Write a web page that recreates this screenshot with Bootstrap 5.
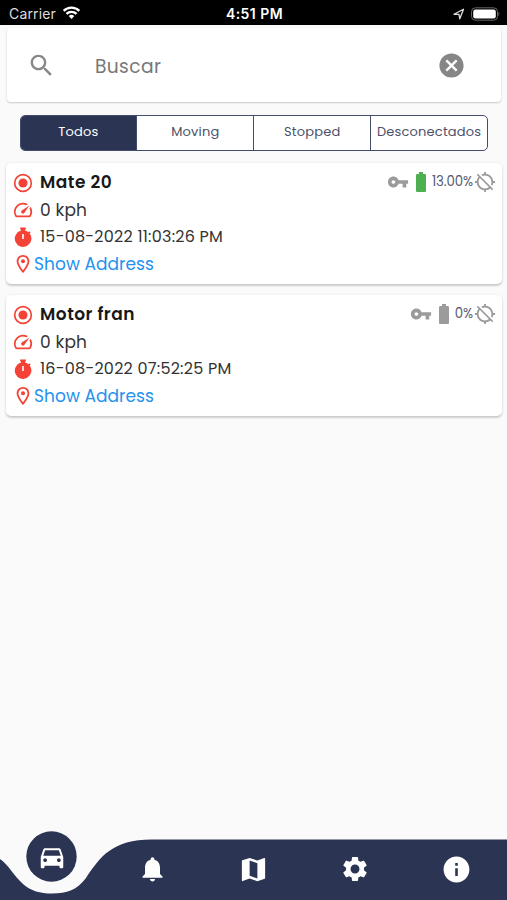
<!DOCTYPE html>
<html lang="es">
<head>
<meta charset="utf-8">
<meta name="viewport" content="width=device-width, initial-scale=1">
<title>Buscar</title>
<link href="https://cdn.jsdelivr.net/npm/bootstrap@5.3.0/dist/css/bootstrap.min.css" rel="stylesheet">
<style>
:root{--navy:#2b3452}
body{font-family:Poppins,Inter,sans-serif;background:#fafafa;color:#333;height:900px;overflow:hidden}
svg{display:block;fill:currentColor;flex:none}
span,a{white-space:nowrap}
.status{height:25px;background:#000;color:#fff;font:14px/25px Inter,sans-serif;padding:1px 7px 0 9px;display:grid;grid-template-columns:1fr auto 1fr}
.status .carrier{color:#ddd;letter-spacing:.15px}
.status .clock{font-size:14px;letter-spacing:.45px}
.panel{border:0;border-radius:5px;background:#fff;box-shadow:0 2px 2px rgba(0,0,0,.17),0 0 3px rgba(0,0,0,.08)}
.search{height:74px;margin:3px 6px 0 7px;padding:1px 35px 0 20px;border-radius:4px;box-shadow:0 1px 2px rgba(0,0,0,.2)}
.search .hint{font-size:18.7px;color:#777;margin-left:39px;letter-spacing:.35px;padding-top:4px}
.tabs{margin:13px 19px 0 19.5px;height:36px;border:1.5px solid #454c6b;border-radius:5px;background:#fff;overflow:hidden}
.tabs a{flex:1 1 0;min-width:0;font-size:13px;letter-spacing:.18px;line-height:32px;color:#4c5068;text-decoration:none;text-align:center}
.tabs a+a{border-left:1.5px solid #454c6b}
.tabs a.active{background:var(--navy);color:#fff}
.device{height:121px;margin:0 5px 11px 6px;padding:6px 6px 0 7px}
.device .line{height:27px}
.device .line>svg{color:#f44336;margin-right:7px}
.device .title-text{font-size:17px;font-weight:600;color:#181818;letter-spacing:.5px}
.device .value{font-size:17px;padding-top:2px;letter-spacing:.15px}
.device .stamp{font-size:16px;letter-spacing:.23px}
.device .addr{font-size:17px;color:#2492ee;text-decoration:none;padding-top:2px;letter-spacing:.05px;margin-left:1px}
.meta{color:#9b9b9b;font-size:13.3px}
.meta span{color:#555970;letter-spacing:-.1px;margin-right:1px;position:relative;top:-.5px}
.meta svg{margin-top:-1px}
.meta .cell{margin:-1px 5px 0 6px}
.dock{height:62px}
.dock .wave{position:absolute;left:0;bottom:0;color:var(--navy)}
.dock .slot{width:101.4px;color:#fff;position:relative;padding-top:16px;padding-left:1px}
.dock .slot.current{padding-top:4px;padding-left:2px}
</style>
<script src="https://cdn.jsdelivr.net/npm/bootstrap@5.3.0/dist/js/bootstrap.bundle.min.js"></script>
</head>
<body class="d-flex flex-column">
<svg width="0" height="0" class="position-absolute">
<symbol id="i-radio" viewBox="0 0 24 24"><circle cx="12" cy="12" r="5.500"/><circle cx="12" cy="12" r="10" fill="none" stroke="currentColor" stroke-width="2"/></symbol>
<symbol id="i-speed" viewBox="1 2 22 20"><path d="M20.380 8.570l-1.230 1.850a8 8 0 0 1-.22 7.580H5.070A8 8 0 0 1 15.580 6.850l1.850-1.230A10 10 0 0 0 3.350 19a2 2 0 0 0 1.720 1h13.850a2 2 0 0 0 1.740-1 10 10 0 0 0-.27-10.440zm-9.790 6.840a2 2 0 0 0 2.830 0l5.660-8.490-8.490 5.660a2 2 0 0 0 0 2.830z"/></symbol>
<symbol id="i-timer" viewBox="0 0 20 20"><path fill-rule="evenodd" d="M7.200.5h5.600v2H12v1.100a8 8 0 0 1 3.300 1.600l1-1 1.400 1.400-1 1A8.300 8.300 0 1 1 8 3.600V2.500h-.8zM9.200 7v5h1.600V7z"/></symbol>
<symbol id="i-pin" viewBox="4 1 16 22"><path d="M12 2C8.130 2 5 5.130 5 9c0 5.250 7 13 7 13s7-7.750 7-13c0-3.870-3.130-7-7-7zM7 9c0-2.760 2.240-5 5-5s5 2.240 5 5c0 2.880-2.880 7.190-5 9.880C9.920 16.210 7 11.850 7 9z"/><circle cx="12" cy="9" r="2.200"/></symbol>
<symbol id="i-key" viewBox="0 0 24 24"><path d="M12.650 10C11.830 7.670 9.610 6 7 6c-3.310 0-6 2.690-6 6s2.690 6 6 6c2.610 0 4.830-1.670 5.650-4H17v4h4v-4h2v-4H12.650zM7 14c-1.100 0-2-.9-2-2s.9-2 2-2 2 .9 2 2-.9 2-2 2z"/></symbol>
<symbol id="i-battery" viewBox="6 1 12 22"><path d="M15.670 4H14V2h-4v2H8.330C7.600 4 7 4.600 7 5.330v15.330C7 21.400 7.600 22 8.330 22h7.330c.74 0 1.340-.6 1.340-1.330V5.330C17 4.600 16.400 4 15.670 4z"/></symbol>
<symbol id="i-nogps" viewBox="0 0 24 24"><path d="M20.940 11c-.46-4.170-3.770-7.480-7.940-7.940V1h-2v2.060c-1.130.12-2.190.46-3.160.97l1.500 1.500C10.160 5.190 11.060 5 12 5c3.870 0 7 3.130 7 7 0 .94-.19 1.840-.52 2.650l1.500 1.500c.5-.96.84-2.020.97-3.150H23v-2h-2.060zM3 4.270l2.040 2.040C3.970 7.620 3.250 9.230 3.060 11H1v2h2.060c.46 4.170 3.770 7.480 7.940 7.940V23h2v-2.060c1.770-.2 3.380-.91 4.690-1.980L19.730 21 21 19.730 4.270 3 3 4.270zm13.270 13.270C15.090 18.450 13.610 19 12 19c-3.870 0-7-3.130-7-7 0-1.610.55-3.090 1.460-4.270l9.810 9.810z"/></symbol>
</svg>

<header class="status">
<div class="d-flex align-items-center"><span class="carrier">Carrier</span><svg style="margin:-2px 0 0 6px" width="19" height="14" viewBox="0 0 20 15"><path d="M1.600 5.200a12 12 0 0 1 16.800 0M4.600 8.500a7.700 7.700 0 0 1 10.800 0" fill="none" stroke="#fff" stroke-width="2.500"/><path d="M10 14l-3-3.200a4.500 4.500 0 0 1 6 0z"/></svg></div>
<span class="fw-semibold clock">4:51 PM</span>
<div class="d-flex align-items-center justify-content-end gap-1"><svg width="14" height="14" viewBox="0 0 14 14"><path d="M2 7.300L11.500 2.200 7.800 11.800 7 7.300z" fill="none" stroke="#ddd" stroke-width="1.300" stroke-linejoin="round"/></svg><svg width="30" height="14" viewBox="0 0 30 14"><rect x="1.500" y=".8" width="26" height="12.400" rx="3.800" fill="none" stroke="#666"/><rect x="3.200" y="2.500" width="22.600" height="9" rx="2.200"/><path d="M28.500 4.800q1.800 2.200 0 4.400z" fill="#777"/></svg></div>
</header>

<div class="panel search d-flex align-items-center">
<svg width="29" height="29" viewBox="0 0 24 24" color="#888"><path d="M15.500 14h-.79l-.28-.27C15.410 12.590 16 11.110 16 9.500 16 5.910 13.090 3 9.500 3S3 5.910 3 9.500 5.910 16 9.500 16c1.610 0 3.090-.59 4.230-1.570l.27.28v.79l5 4.990L20.490 19l-4.990-5zm-6 0C7.010 14 5 11.990 5 9.500S7.010 5 9.500 5 14 7.010 14 9.500 11.990 14 9.500 14z"/></svg>
<span class="hint">Buscar</span>
<svg class="ms-auto" width="29" height="29" viewBox="0 0 24 24" color="#868686"><path d="M12 2C6.470 2 2 6.470 2 12s4.470 10 10 10 10-4.470 10-10S17.530 2 12 2zm5 13.590L15.590 17 12 13.410 8.410 17 7 15.590 10.590 12 7 8.410 8.410 7 12 10.590 15.590 7 17 8.410 13.410 12 17 15.590z"/></svg>
</div>

<nav class="tabs d-flex">
<a href="#" class="active">Todos</a><a href="#">Moving</a><a href="#">Stopped</a><a href="#">Desconectados</a>
</nav>

<main class="flex-grow-1" style="padding-top:12px">
<article class="panel device">
<div class="line d-flex align-items-center"><svg width="20" height="20"><use href="#i-radio"/></svg><span class="title-text">Mate 20</span>
<div class="meta ms-auto d-flex align-items-center"><svg width="22" height="22"><use href="#i-key"/></svg><svg width="12" height="22" class="cell"><use href="#i-battery" color="#4caf50"/></svg><span>13.00%</span><svg width="22" height="22"><use href="#i-nogps"/></svg></div></div>
<div class="line d-flex align-items-center"><svg width="20" height="20"><use href="#i-speed"/></svg><span class="value">0 kph</span></div>
<div class="line d-flex align-items-center"><svg width="20" height="20"><use href="#i-timer"/></svg><span class="stamp">15-08-2022 11:03:26 PM</span></div>
<div class="line d-flex align-items-center"><svg width="20" height="20" class="me-0"><use href="#i-pin"/></svg><a class="addr" href="#">Show Address</a></div>
</article>
<article class="panel device">
<div class="line d-flex align-items-center"><svg width="20" height="20"><use href="#i-radio"/></svg><span class="title-text">Motor fran</span>
<div class="meta ms-auto d-flex align-items-center"><svg width="22" height="22"><use href="#i-key"/></svg><svg width="12" height="22" class="cell"><use href="#i-battery"/></svg><span>0%</span><svg width="22" height="22"><use href="#i-nogps"/></svg></div></div>
<div class="line d-flex align-items-center"><svg width="20" height="20"><use href="#i-speed"/></svg><span class="value">0 kph</span></div>
<div class="line d-flex align-items-center"><svg width="20" height="20"><use href="#i-timer"/></svg><span class="stamp">16-08-2022 07:52:25 PM</span></div>
<div class="line d-flex align-items-center"><svg width="20" height="20" class="me-0"><use href="#i-pin"/></svg><a class="addr" href="#">Show Address</a></div>
</article>
</main>

<nav class="dock position-relative d-flex">
<svg class="wave" width="507" height="69" viewBox="0 0 507 69"><path d="M0 28C8 33 14 45 23 53C31 60 40 62.500 52 62.500C67 62.500 77 59 86 47C100 26 112 8.500 152 8.500H507V69H0z"/><circle cx="51.500" cy="25.500" r="25.200"/></svg>
<a href="#" class="slot current d-flex justify-content-center"><svg width="30" height="30" viewBox="0 0 24 24"><path d="M18.920 6.010C18.720 5.420 18.160 5 17.500 5h-11c-.66 0-1.210.42-1.420 1.010L3 12v8c0 .55.45 1 1 1h1c.55 0 1-.45 1-1v-1h12v1c0 .55.45 1 1 1h1c.55 0 1-.45 1-1v-8l-2.080-5.990zM6.500 16c-.83 0-1.500-.67-1.500-1.500S5.670 13 6.500 13s1.500.67 1.500 1.500S7.330 16 6.500 16zm11 0c-.83 0-1.500-.67-1.500-1.500s.67-1.500 1.500-1.500 1.500.67 1.500 1.500-.67 1.500-1.500 1.500zM5 11l1.500-4.500h11L19 11H5z"/></svg></a>
<a href="#" class="slot d-flex justify-content-center"><svg width="31" height="30" viewBox="0 0 24 24"><path d="M12 22c1.100 0 2-.9 2-2h-4c0 1.100.89 2 2 2zm6-6v-5c0-3.070-1.640-5.640-4.500-6.320V4c0-.83-.67-1.500-1.500-1.500s-1.500.67-1.500 1.500v.68C7.630 5.360 6 7.920 6 11v5l-2 2v1h16v-1l-2-2z"/></svg></a>
<a href="#" class="slot d-flex justify-content-center"><svg width="31" height="31" viewBox="0 0 24 24"><path d="M20.500 3l-.16.030L15 5.100 9 3 3.360 4.900c-.21.070-.36.250-.36.480V20.500c0 .28.22.5.5.5l.16-.03L9 18.900l6 2.100 5.640-1.900c.21-.07.36-.25.36-.48V3.500c0-.28-.22-.5-.5-.5zM15 19l-6-2.110V5l6 2.110V19z"/></svg></a>
<a href="#" class="slot d-flex justify-content-center"><svg width="30" height="30" viewBox="0 0 24 24"><path d="M19.140 12.940c.04-.3.06-.61.06-.94 0-.32-.02-.64-.07-.94l2.030-1.580c.18-.14.23-.41.12-.61l-1.920-3.320c-.12-.22-.37-.29-.59-.22l-2.390.96c-.5-.38-1.030-.7-1.620-.94l-.36-2.540c-.04-.24-.24-.41-.48-.41h-3.840c-.24 0-.43.17-.47.41l-.36 2.540c-.59.24-1.130.57-1.620.94l-2.390-.96c-.22-.08-.47 0-.59.22L2.740 8.870c-.12.21-.08.47.12.61l2.030 1.580c-.05.3-.09.63-.09.94s.02.64.07.94l-2.030 1.580c-.18.14-.23.41-.12.61l1.920 3.320c.12.22.37.29.59.22l2.390-.96c.5.38 1.030.7 1.620.94l.36 2.540c.05.24.24.41.48.41h3.840c.24 0 .44-.17.47-.41l.36-2.540c.59-.24 1.130-.56 1.620-.94l2.390.96c.22.08.47 0 .59-.22l1.920-3.320c.12-.22.07-.47-.12-.61l-2.010-1.580zM12 15.600c-1.980 0-3.600-1.620-3.600-3.600s1.620-3.600 3.600-3.600 3.600 1.620 3.600 3.600-1.620 3.600-3.600 3.600z"/></svg></a>
<a href="#" class="slot d-flex justify-content-center"><svg width="31" height="31" viewBox="0 0 24 24"><path d="M12 2C6.480 2 2 6.480 2 12s4.480 10 10 10 10-4.480 10-10S17.520 2 12 2zm1 15h-2v-6h2v6zm0-8h-2V7h2v2z"/></svg></a>
</nav>
</body>
</html>
